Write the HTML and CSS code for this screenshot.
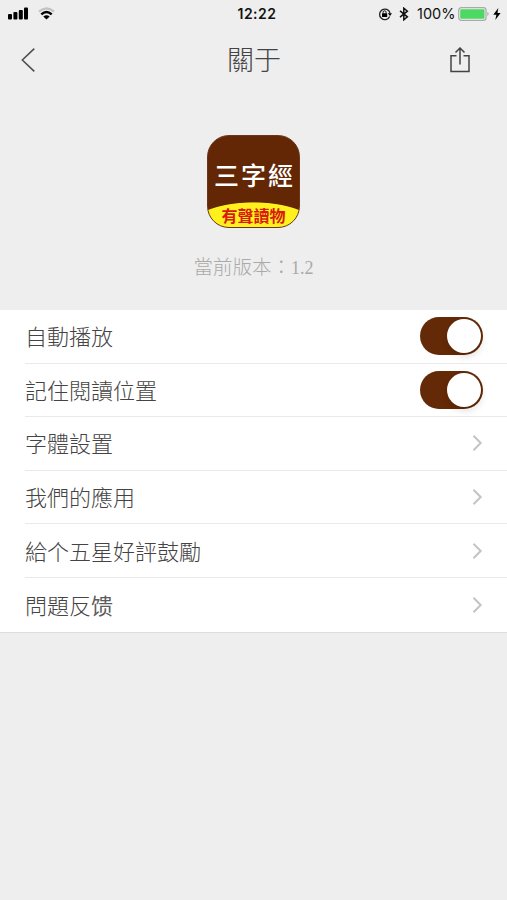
FILE: index.html
```html
<!DOCTYPE html>
<html lang="zh-Hant">
<head>
  <meta charset="UTF-8">
  <meta name="viewport" content="width=device-width, initial-scale=1">
  <title>關于</title>
  <link rel="stylesheet" href="styles.css">
</head>
<body>
  <header class="statusbar">
    <div class="status-left">
      <svg class="signal" width="21" height="14" viewBox="0 0 21 14">
        <rect x="0" y="7" width="4" height="5.5" rx="1"/>
        <rect x="5.4" y="5" width="4" height="7.5" rx="1"/>
        <rect x="10.8" y="3" width="4" height="9.5" rx="1"/>
        <rect x="16" y="0.5" width="4" height="12" rx="1"/>
      </svg>
      <svg class="wifi" width="18" height="14" viewBox="0 0 18 14">
        <path d="M1 4.6Q8.5-2 16 4.6" fill="none" stroke="#c2c2c2" stroke-width="2.2"/>
        <path d="M3.3 7.4Q8.5 2.8 13.7 7.4" fill="none" stroke="#000" stroke-width="2.4"/>
        <path d="M5.3 9.5Q8.5 6.9 11.7 9.5L8.5 12.6Z"/>
      </svg>
    </div>
    <div class="time">12:22</div>
    <div class="status-right">
      <svg class="lock" width="14" height="14" viewBox="0 0 14 14">
        <path d="M11.7 9.6A5.3 5.3 0 1 1 12 6" fill="none" stroke="#222" stroke-width="1.3"/>
        <path d="M9.8 6.3H14L12 9Z"/>
        <rect x="4" y="6.3" width="5.2" height="3.8" rx=".5"/>
        <path d="M5.1 6.6V5.3a1.5 1.5 0 0 1 3 0v1.3" fill="none" stroke="#111" stroke-width="1"/>
      </svg>
      <svg class="bluetooth" width="10" height="14" viewBox="0 0 10 14">
        <path d="M1 3.8L8.4 9.8L4.8 12.8V1.2L8.4 4.2L1 10.2" fill="none" stroke="#111" stroke-width="1.5"/>
      </svg>
      <span class="percent">100%</span>
      <svg class="battery" width="32" height="14" viewBox="0 0 32 14">
        <rect x=".7" y=".7" width="27.3" height="12.6" rx="2.6" fill="#eee" stroke="#aaa" stroke-width="1.2"/>
        <rect x="2.2" y="2.2" width="24.3" height="9.6" rx="1" fill="#4bd964"/>
        <path d="M29.5 4.8Q31.5 7 29.5 9.2Z" fill="#999"/>
      </svg>
      <svg class="bolt" width="8" height="12" viewBox="0 0 8 12">
        <path d="M5.3 0L.3 6.7H3.4L2.3 12L7.6 5H4.5Z"/>
      </svg>
    </div>
  </header>

  <nav class="navbar">
    <svg class="back" width="16" height="26" viewBox="0 0 16 26">
      <path d="M13.3 1.6L1.3 13L13.3 24.4" fill="none" stroke="#4c4c4c" stroke-width="1.5"/>
    </svg>
    <h1 class="title">關于</h1>
    <svg class="share" width="22" height="26" viewBox="0 0 22 26">
      <path d="M7.5 8.7H2V24.5H20V8.7H14.5M11 17.5V1.2M6.5 5.5L11 1L15.5 5.5" fill="none" stroke="#444" stroke-width="1.5"/>
    </svg>
  </nav>

  <section class="about">
    <div class="app-icon">
      <div class="app-name">三字經</div>
      <div class="app-tag">有聲讀物</div>
    </div>
    <p class="version">當前版本：<span class="number">1.2</span></p>
  </section>

  <ul class="settings">
    <li class="row"><span class="label">自動播放</span><i class="switch"></i></li>
    <li class="row"><span class="label">記住閱讀位置</span><i class="switch"></i></li>
    <li class="row"><span class="label">字體設置</span><svg class="chevron" width="11" height="18" viewBox="0 0 11 18"><path d="M1.5 1.8L8.7 9L1.5 16.2"/></svg></li>
    <li class="row"><span class="label">我們的應用</span><svg class="chevron" width="11" height="18" viewBox="0 0 11 18"><path d="M1.5 1.8L8.7 9L1.5 16.2"/></svg></li>
    <li class="row"><span class="label">給个五星好評鼓勵</span><svg class="chevron" width="11" height="18" viewBox="0 0 11 18"><path d="M1.5 1.8L8.7 9L1.5 16.2"/></svg></li>
    <li class="row"><span class="label">問題反<span class="fallback">馈</span></span><svg class="chevron" width="11" height="18" viewBox="0 0 11 18"><path d="M1.5 1.8L8.7 9L1.5 16.2"/></svg></li>
  </ul>
</body>
</html>
```
FILE: styles.css
```css
* { box-sizing: border-box; }
body {
  margin: 0;
  min-height: 900px;
  background: #eee;
  color: #444;
  font-family: "Noto Sans CJK TC", sans-serif;
  font-weight: 300;
}
svg { display: block; flex: none; }

/* status bar */
.statusbar {
  display: grid;
  grid-template-columns: 1fr auto 1fr;
  align-items: center;
  height: 27px;
  padding: 0 6px 0 8px;
  color: #111;
  font-family: Inter, sans-serif;
}
.status-left { display: flex; gap: 9px; }
.time { padding-left: 5px; font-size: 14px; font-weight: 600; letter-spacing: 0.5px; }
.status-right { display: flex; align-items: center; justify-content: flex-end; }
.bluetooth { margin-left: 7px; }
.percent { width: 38px; margin: 0 3px 0 8px; font-size: 14.5px; font-weight: 400; white-space: nowrap; }
.bolt { margin-left: 3px; }

/* navigation */
.navbar {
  display: grid;
  grid-template-columns: 1fr auto 1fr;
  align-items: center;
  height: 66px;
  padding: 0 36px 0 21px;
}
.title { margin: 0 0 2px 16px; font-size: 27px; font-weight: 300; line-height: 38px; }
.share { justify-self: end; }

/* app icon and version */
.about {
  display: flex;
  flex-direction: column;
  align-items: center;
  height: 217px;
  padding-top: 42px;
}
.app-icon {
  width: 93px;
  height: 93px;
  border: 1px solid #6b3516;
  border-radius: 22px;
  background: radial-gradient(ellipse 67px 28px at 50% 94px, #fff01e 97%, #632706 100%);
  text-align: center;
  white-space: nowrap;
  overflow: hidden;
}
.app-name {
  height: 67px;
  padding-top: 21px;
  color: #fff;
  font-size: 25px;
  font-weight: 500;
  line-height: 34px;
  letter-spacing: 2px;
  text-indent: 2px;
}
.app-tag { color: #d71b0c; font-size: 16px; font-weight: 700; line-height: 25px; }
.version {
  margin: 24px 0 0;
  color: #aaa;
  font-size: 19.5px;
  line-height: 28px;
}
.version .number { font-family: "Liberation Serif", serif; font-size: 18px; }

/* settings list */
.settings {
  margin: 0;
  padding: 0 0 0 25px;
  list-style: none;
  background: #fff;
  border-bottom: 1px solid #ddd;
}
.row {
  display: flex;
  align-items: center;
  justify-content: space-between;
  height: 53.6px;
  padding-right: 24px;
  border-bottom: 1px solid #e9e9e9;
  font-size: 22px;
  line-height: 32px;
}
.row:last-child { border-bottom: 0; }
.label { padding-bottom: 2px; }
.fallback { color: #5c5c5c; font-weight: 400; }
.switch {
  display: flex;
  justify-content: flex-end;
  width: 63px;
  height: 38px;
  padding: 2px;
  border-radius: 19px;
  background: #642906;
}
.switch::after {
  content: "";
  width: 34px;
  height: 34px;
  border-radius: 50%;
  background: #fff;
  box-shadow: 1px 4px 7px rgba(0, 0, 0, 0.12);
}
.chevron path { fill: none; stroke: #c4c4c4; stroke-width: 2; }
```
